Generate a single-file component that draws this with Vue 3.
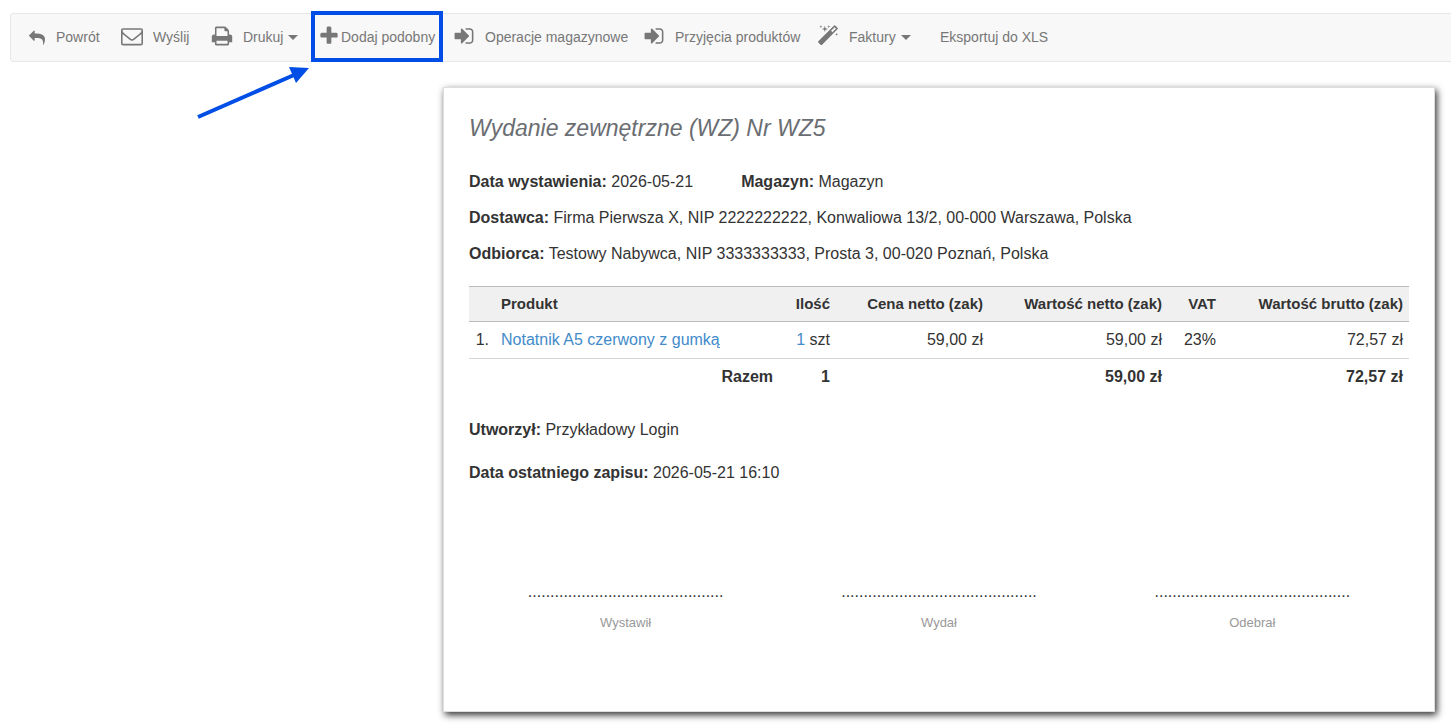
<script setup>
import { ref } from 'vue'

const icons = {
  reply: "M1792 1120q0 166-127 451-3 7-10.5 24t-13.5 30-13 22q-12 17-28 17-15 0-23.5-10t-8.5-25q0-9 2.5-26.5t2.5-23.5q5-68 5-123 0-101-17.5-181t-48.5-138.5-80-101-105.5-69.5-133-42.5-154-21.5-175.5-6h-224v256q0 26-19 45t-45 19-45-19l-512-512q-19-19-19-45t19-45l512-512q19-19 45-19t45 19 19 45v256h224q713 0 875 403 53 134 53 333z",
  envelope: "M1664 1504v-768q-32 36-69 66-268 206-426 338-51 43-83 67t-86.5 48.5-102.5 24.5h-2q-48 0-102.5-24.5t-86.5-48.5-83-67q-158-132-426-338-37-30-69-66v768q0 13 9.5 22.5t22.5 9.5h1472q13 0 22.5-9.5t9.5-22.5zm0-1051v-24.5l-.5-13-3-12.5-5.5-9-9-7.5-14-2.5h-1472q-13 0-22.5 9.5t-9.5 22.5q0 168 147 284 193 152 401 317 6 5 35 29.5t46 37.5 44.5 31.5 50.5 27.5 43 9h2q20 0 43-9t50.5-27.5 44.5-31.5 46-37.5 35-29.5q208-165 401-317 54-43 100.5-115.5t46.5-131.5zm128-37v1088q0 66-47 113t-113 47h-1472q-66 0-113-47t-47-113v-1088q0-66 47-113t113-47h1472q66 0 113 47t47 113z",
  print: "M448 1536h896v-256h-896v256zm0-640h896v-384h-160q-40 0-68-28t-28-68v-160h-640v640zm1280 64v416q0 13-9.5 22.5t-22.5 9.5h-224v160q0 40-28 68t-68 28h-960q-40 0-68-28t-28-68v-160h-224q-13 0-22.5-9.5t-9.5-22.5v-416q0-79 56.5-135.5t135.5-56.5h64v-544q0-40 28-68t68-28h672q40 0 88 20t76 48l152 152q28 28 48 76t20 88v256h64q79 0 135.5 56.5t56.5 135.5z",
  plus: "M1600 736v192q0 40-28 68t-68 28h-416v416q0 40-28 68t-68 28h-192q-40 0-68-28t-28-68v-416h-416q-40 0-68-28t-28-68v-192q0-40 28-68t68-28h416v-416q0-40 28-68t68-28h192q40 0 68 28t28 68v416h416q40 0 68 28t28 68z",
  signIn: "M1312 896q0 26-19 45l-544 544q-19 19-45 19t-45-19-19-45v-288h-448q-26 0-45-19t-19-45v-384q0-26 19-45t45-19h448v-288q0-26 19-45t45-19 45 19l544 544q19 19 19 45zm352-352v704q0 119-84.5 203.5t-203.5 84.5h-320q-13 0-22.5-9.5t-9.5-22.5q0-4-1-20t-.5-26.5 3-23.5 10-19.5 20.5-6.5h320q66 0 113-47t47-113v-704q0-66-47-113t-113-47h-312l-11.5-1-11.5-3-8-5.5-7-9-2-13.5q0-4-1-20t-.5-26.5 3-23.5 10-19.5 20.5-6.5h320q119 0 203.5 84.5t84.5 203.5z",
  magic: "M1254 581l293-293-107-107-293 293zm447-293q0 27-18 45l-1286 1286q-18 18-45 18t-45-18l-198-198q-18-18-18-45t18-45l1286-1286q18-18 45-18t45 18l198 198q18 18 18 45zm-1351-190l98 30-98 30-30 98-30-98-98-30 98-30 30-98zm350 162l196 60-196 60-60 196-60-196-196-60 196-60 60-196zm930 478l98 30-98 30-30 98-30-98-98-30 98-30 30-98zm-640-640l98 30-98 30-30 98-30-98-98-30 98-30 30-98z",
};

const menu = [
  { label: "Powrót", icon: "reply", small: true },
  { label: "Wyślij", icon: "envelope" },
  { label: "Drukuj", icon: "print", dropdown: true },
  { label: "Dodaj podobny", icon: "plus", marked: true },
  { label: "Operacje magazynowe", icon: "signIn" },
  { label: "Przyjęcia produktów", icon: "signIn" },
  { label: "Faktury", icon: "magic", dropdown: true },
  { label: "Eksportuj do XLS" },
];

const rows = ref([
  { name: "Notatnik A5 czerwony z gumką", qty: 1, unit: "szt", price: "59,00 zł", net: "59,00 zł", vat: "23%", gross: "72,57 zł" },
]);

const signatures = ["Wystawił", "Wydał", "Odebrał"];
const dots = ".".repeat(44);
</script>

<template>
  <div class="page">
    <nav class="toolbar">
      <div v-for="item in menu" :key="item.label" class="item" :class="{ marked: item.marked }">
        <button v-if="item.dropdown" type="button" class="link">
          <svg class="icon" viewBox="0 0 1792 1792"><path :d="icons[item.icon]" /></svg>
          <span>{{ item.label }}</span>
          <i class="caret"></i>
        </button>
        <a v-else href="#" class="link">
          <svg v-if="item.icon" class="icon" :class="{ small: item.small }" viewBox="0 0 1792 1792">
            <path :d="icons[item.icon]" />
          </svg>
          <span>{{ item.label }}</span>
        </a>
        <svg v-if="item.marked" class="arrow" viewBox="0 0 114 54">
          <path d="M2 51L98 9" />
          <polygon points="93,1 113,2 100,17" />
        </svg>
      </div>
    </nav>

    <main class="document">
      <h1>Wydanie zewnętrzne (WZ) Nr WZ5</h1>
      <div class="info">
        <p class="split">
          <span><b>Data wystawienia:</b> 2026-05-21</span>
          <span><b>Magazyn:</b> Magazyn</span>
        </p>
        <p><b>Dostawca:</b> Firma Pierwsza X, NIP 2222222222, Konwaliowa 13/2, 00-000 Warszawa, Polska</p>
        <p><b>Odbiorca:</b> Testowy Nabywca, NIP 3333333333, Prosta 3, 00-020 Poznań, Polska</p>
      </div>

      <table>
        <colgroup>
          <col class="c-no"><col><col class="c-qty"><col class="c-price"><col class="c-net"><col class="c-vat"><col class="c-gross">
        </colgroup>
        <thead>
          <tr>
            <th></th>
            <th class="left">Produkt</th>
            <th>Ilość</th>
            <th>Cena netto (zak)</th>
            <th>Wartość netto (zak)</th>
            <th>VAT</th>
            <th>Wartość brutto (zak)</th>
          </tr>
        </thead>
        <tbody>
          <tr v-for="(row, i) in rows" :key="i">
            <td>{{ i + 1 }}.</td>
            <td class="left"><a href="#">{{ row.name }}</a></td>
            <td><a href="#">{{ row.qty }}</a> {{ row.unit }}</td>
            <td>{{ row.price }}</td>
            <td>{{ row.net }}</td>
            <td>{{ row.vat }}</td>
            <td>{{ row.gross }}</td>
          </tr>
        </tbody>
        <tfoot>
          <tr>
            <td colspan="2">Razem</td>
            <td>1</td>
            <td></td>
            <td>59,00 zł</td>
            <td></td>
            <td>72,57 zł</td>
          </tr>
        </tfoot>
      </table>

      <div class="meta">
        <p><b>Utworzył:</b> Przykładowy Login</p>
        <p><b>Data ostatniego zapisu:</b> 2026-05-21 16:10</p>
      </div>

      <div class="signatures">
        <div v-for="name in signatures" :key="name">
          <div class="dots">{{ dots }}</div>
          <div class="who">{{ name }}</div>
        </div>
      </div>
    </main>
  </div>
</template>

<style>
body {
  margin: 0;
  background: #fff;
  overflow-x: hidden;
}
</style>

<style scoped>
.page {
  padding-top: 13px;
  font-family: "Liberation Sans", Arial, sans-serif;
  font-size: 16px;
  line-height: 20px;
  color: #333;
}

.toolbar {
  display: grid;
  grid-template-columns: 92px 90px 107px 135px 190px 174px 123px auto;
  align-items: center;
  min-height: 46px;
  margin-left: 10px;
  padding: 0 0 1px 18px;
  background: #f8f8f8;
  border: 1px solid #e7e7e7;
  border-right: 0;
  border-radius: 4px 0 0 4px;
}

.item {
  position: relative;
}

.link {
  display: flex;
  align-items: center;
  gap: 10px;
  padding: 0;
  border: 0;
  background: none;
  font-family: inherit;
  font-size: 14px;
  line-height: 20px;
  color: #777;
  text-decoration: none;
  white-space: nowrap;
}

.icon {
  width: 22px;
  height: 22px;
  margin: -1px 0 1px;
  fill: #777;
}

.icon.small {
  width: 16px;
  height: 16px;
  margin: 1px 1px 0 0;
}

.caret {
  margin-left: -5px;
  border: 5px solid transparent;
  border-top-color: #777;
  border-bottom: 0;
}

.marked .link {
  gap: 1px;
}

/* highlight frame around the marked button */
.marked::after {
  content: "";
  position: absolute;
  inset: -15px 10px -14px -7px;
  border: 4px solid #004ee6;
  pointer-events: none;
}

.arrow {
  position: absolute;
  top: 40px;
  left: -122px;
  width: 114px;
  height: 54px;
  fill: #004ee6;
}

.arrow path {
  stroke: #004ee6;
  stroke-width: 4;
}

.document {
  box-sizing: border-box;
  max-width: 992px;
  margin: 25px 16px 14px auto;
  padding: 25px 25px 78px;
  background: #fff;
  border: 1px solid #ddd;
  box-shadow: 2px 3px 7px #333;
}

h1 {
  margin: 0 0 21px;
  font-size: 23px;
  line-height: 30px;
  font-weight: normal;
  font-style: italic;
  color: #6a6d72;
}

p {
  margin: 0;
}

.info p {
  padding: 8px 0;
}

.split {
  display: flex;
  gap: 48px;
}

table {
  width: 100%;
  margin-top: 14px;
  border-collapse: collapse;
  table-layout: fixed;
}

.c-no { width: 26px; }
.c-qty { width: 57px; }
.c-price { width: 153px; }
.c-net { width: 179px; }
.c-vat { width: 54px; }
.c-gross { width: 187px; }

th,
td {
  padding: 8px 6px;
  text-align: right;
  white-space: nowrap;
}

th {
  padding: 7px 6px;
  background: #f0f0f0;
  border-top: 1px solid #bbb;
  border-bottom: 1px solid #bbb;
  font-size: 15px;
}

tbody td {
  border-bottom: 1px solid #d5d5d5;
}

tfoot td {
  font-weight: bold;
}

.left {
  text-align: left;
}

td a {
  color: #428bca;
  text-decoration: none;
}

.meta {
  display: grid;
  gap: 23px;
  margin-top: 25px;
}

.signatures {
  display: grid;
  grid-template-columns: repeat(3, 1fr);
  margin-top: 99px;
  text-align: center;
}

.who {
  margin-top: 11px;
  font-size: 13px;
  color: #999;
}
</style>
